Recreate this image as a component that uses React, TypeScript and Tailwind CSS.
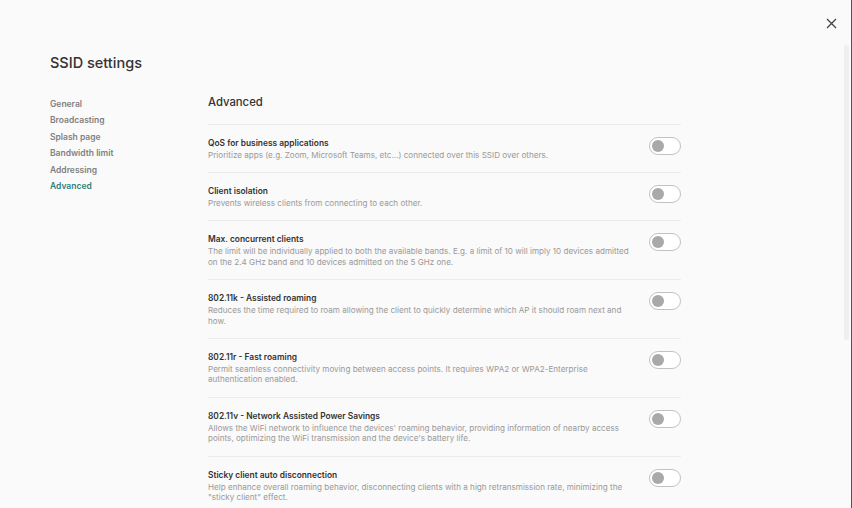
import { useState } from 'react';

const navItems = ['General', 'Broadcasting', 'Splash page', 'Bandwidth limit', 'Addressing', 'Advanced'];

const settings = [
  {
    title: 'QoS for business applications',
    description: 'Prioritize apps (e.g. Zoom, Microsoft Teams, etc...) connected over this SSID over others.',
  },
  {
    title: 'Client isolation',
    description: 'Prevents wireless clients from connecting to each other.',
  },
  {
    title: 'Max. concurrent clients',
    description:
      'The limit will be individually applied to both the available bands. E.g. a limit of 10 will imply 10 devices admitted on the 2.4 GHz band and 10 devices admitted on the 5 GHz one.',
  },
  {
    title: '802.11k - Assisted roaming',
    description:
      'Reduces the time required to roam allowing the client to quickly determine which AP it should roam next and how.',
  },
  {
    title: '802.11r - Fast roaming',
    description:
      'Permit seamless connectivity moving between access points. It requires WPA2 or WPA2-Enterprise authentication enabled.',
  },
  {
    title: '802.11v - Network Assisted Power Savings',
    description:
      "Allows the WiFi network to influence the devices' roaming behavior, providing information of nearby access points, optimizing the WiFi transmission and the device's battery life.",
  },
  {
    title: 'Sticky client auto disconnection',
    description:
      'Help enhance overall roaming behavior, disconnecting clients with a high retransmission rate, minimizing the "sticky client" effect.',
  },
];

export default function App() {
  const [active, setActive] = useState('Advanced');

  return (
    <div
      className="h-[508px] w-[852px] overflow-hidden bg-[#fafafa] flex"
      style={{ fontFamily: 'Inter, "Noto Sans", sans-serif' }}
    >
      <div className="flex-1 flex flex-col min-w-0">
        <div className="shrink-0 flex justify-end pt-[17px] pr-[7px] h-[42px]">
          <button className="w-3 h-3 text-[#444] flex items-center justify-center">
            <svg width="11" height="11" viewBox="0 0 11 11" fill="none" stroke="currentColor" strokeWidth="1.3">
              <path d="M1 1L10 10M10 1L1 10" />
            </svg>
          </button>
        </div>

        <h1 className="shrink-0 ml-[50px] mt-[11px] text-[14.5px] leading-5 font-medium text-[#333]">SSID settings</h1>

        <div className="shrink-0 flex mt-[20px] ml-[50px]">
          <nav className="w-[158px] flex flex-col pt-[3px]">
            {navItems.map((item) => (
              <button
                key={item}
                onClick={() => setActive(item)}
                className={`text-left text-[8.5px] leading-[16.4px] font-semibold ${
                  active === item ? 'text-[#2f7f7c]' : 'text-[#808080]'
                }`}
              >
                {item}
              </button>
            ))}
          </nav>

          <div className="w-[473px]">
            <h2 className="text-[11.3px] leading-4 font-medium text-[#333] pt-[1px] pb-[13.5px]">Advanced</h2>
            <div className="border-t border-[#ececec]">
              {settings.map((s) => (
                <SettingRow key={s.title} title={s.title} description={s.description} />
              ))}
            </div>
          </div>
        </div>
      </div>

      <div className="w-[7px] flex pt-[45px] pb-[10px]">
        <div className="w-[5px] h-[295px] bg-[#efefef] rounded-sm" />
      </div>
      <div className="w-[1px] bg-[#555]" />
    </div>
  );
}

function SettingRow({ title, description }: { title: string; description: string }) {
  const [on, setOn] = useState(false);
  return (
    <div className="flex items-start justify-between border-b border-[#ececec] pt-[12px] pb-[11.7px]">
      <div className="w-[428px]">
        <p className="text-[8.4px] leading-3 font-semibold text-[#333]">{title}</p>
        <p className="text-[8.1px] leading-[10.6px] text-[#999] mt-[1px]">{description}</p>
      </div>
      <button
        onClick={() => setOn(!on)}
        className={`w-[32px] h-[18px] rounded-full border-[1.5px] flex items-center px-[2px] ${
          on ? 'border-[#2f7f7c] bg-[#2f7f7c] justify-end' : 'border-[#c2c2c2] bg-white justify-start'
        }`}
      >
        <span className={`w-[12px] h-[12px] rounded-full ${on ? 'bg-white' : 'bg-[#a9a9a9]'}`} />
      </button>
    </div>
  );
}
